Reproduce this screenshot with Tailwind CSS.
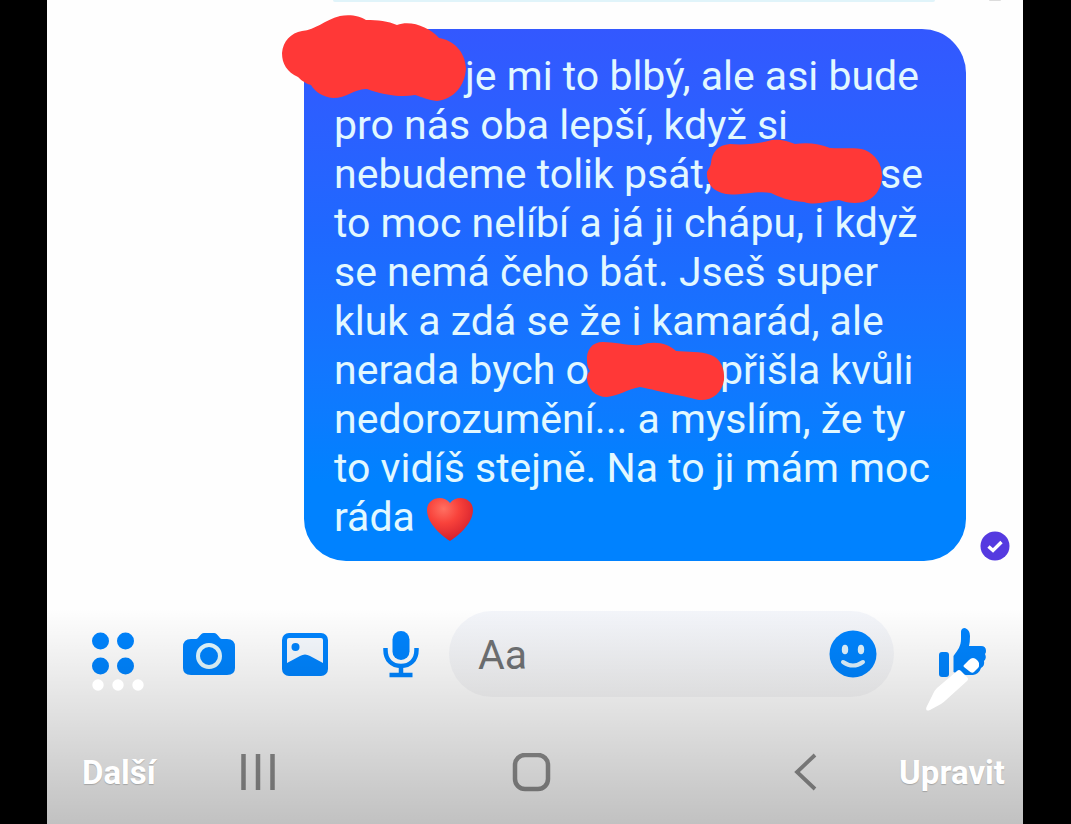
<!DOCTYPE html>
<html lang="cs">
<head>
<meta charset="utf-8">
<meta name="viewport" content="width=device-width, initial-scale=1">
<title>Konverzace</title>
<script src="https://cdn.jsdelivr.net/npm/@tailwindcss/browser@4"></script>
</head>
<body class="bg-black font-[Roboto,sans-serif]">
<div class="relative mr-12 ml-[47px] flex min-h-screen flex-col overflow-hidden bg-[#fefefe]">

  <!-- Bottom edge of the previous message -->
  <div class="flex h-[29px] items-start justify-end pr-[22px]">
    <div class="mr-[54px] h-[2px] w-[602px] rounded-b-full bg-[#e0f4fa]"></div>
    <div class="h-[1px] w-[12px] rounded-b-full bg-[#dcdcdc]"></div>
  </div>

  <main class="flex items-end justify-end pr-[13px]">
    <div class="w-[662px] rounded-[42px] rounded-tr-[44px] bg-linear-to-b from-[#3358ff] via-[#1f68ff] via-38% to-[#0082ff] to-85% pt-[23px] pb-[19px] pl-[30px] text-[41px] leading-[49px] whitespace-nowrap text-[#e2f8ff]">
      <p>
        <span class="block"><span class="relative inline-block h-[30px] w-[131px]"><svg class="absolute -top-[47px] -left-[52px] z-10" width="186" height="90" viewBox="282 13 186 90" fill="#ff3837"><path d="M282 53C283 41 291 33 302 31C316 30 324 20 340 16C350 14 360 16 366 20C378 20 388 21 397 25C411 20 429 27 439 38C453 40 465 51 466 68C465 86 454 99 437 101C428 100 422 97 415 95C399 98 381 94 367 89C356 88 347 98 333 98C323 97 315 92 311 85C304 83 300 79 298 77C287 72 282 64 282 53Z"/></svg></span>je mi to blbý, ale asi bude</span>
        <span class="block">pro nás oba lepší, když si</span>
        <span class="block">nebudeme tolik psát,<span class="relative inline-block h-[30px] w-[168px]"><svg class="absolute -top-[20px] -left-[8px] z-10" width="180" height="68" viewBox="704 138 180 68" fill="#ff3837"><path d="M707 172C708 169 711 166 711 163C712 152 718 145 730 144C742 145 757 144 768 141C776 138 788 141 795 144C808 142 820 144 830 148C843 149 856 147 865 150C876 155 882 164 882 176C882 192 871 203 855 203C849 203 845 202 839 200C828 201 816 206 804 202C789 201 779 197 771 193C758 190 738 196 726 194C714 192 706 184 707 172Z"/></svg></span>se</span>
        <span class="block">to moc nelíbí a já ji chápu, i když</span>
        <span class="block">se nemá čeho bát. Jseš super</span>
        <span class="block">kluk a zdá se že i kamarád, ale</span>
        <span class="block">nerada bych o<span class="relative inline-block h-[30px] w-[131px]"><svg class="absolute -top-[14px] -left-[4px] z-10" width="142" height="62" viewBox="585 340 142 62" fill="#ff3837"><path d="M587 361C586 350 592 342 603 342C615 342 629 346 641 345C655 340 669 344 676 351C687 352 701 351 711 355C721 359 725 369 724 380C722 393 712 401 699 400C690 398 684 396 677 395C662 392 650 389 640 387C628 389 618 396 607 397C595 397 588 389 587 379C587 375 588 373 590 371C588 368 587 365 587 361Z"/></svg></span>přišla kvůli</span>
        <span class="block">nedorozumění... a myslím, že ty</span>
        <span class="block">to vidíš stejně. Na to ji mám moc</span>
        <span class="flex items-center gap-[11px]">ráda
          <svg class="mt-1" width="48" height="45" viewBox="0 0 48 45" role="img" aria-label="srdce"><defs><radialGradient id="heart" cx="36%" cy="25%" r="75%"><stop offset="0" stop-color="#ff7062"/><stop offset=".45" stop-color="#f8423b"/><stop offset="1" stop-color="#d4202d"/></radialGradient></defs><path d="M24 44C19 41 1 28 1 13C1 1 17-3 24 6C31-3 47 1 47 13C47 28 29 41 24 44Z" fill="url(#heart)"/></svg>
        </span>
      </p>
    </div>
    <svg class="ml-[14px] shrink-0" width="30" height="30" viewBox="0 0 30 30" role="img" aria-label="Doručeno"><circle cx="15" cy="15" r="14.5" fill="#553ae0"/><path d="M8.5 15.5L13 19.500L21.500 11" fill="none" stroke="#fff" stroke-width="3.4"/></svg>
  </main>

  <div class="mt-[50px] flex h-[86px] items-center pr-[14px] pl-[18px] text-[#0084ff]">
    <button class="flex w-24 justify-center" aria-label="Další možnosti"><svg width="44" height="44" viewBox="0 0 44 44" fill="currentColor"><circle cx="9.500" cy="9" r="8.500"/><circle cx="34.500" cy="9" r="8.500"/><circle cx="9.500" cy="34" r="8.500"/><circle cx="34.500" cy="34" r="8.500"/></svg></button>
    <button class="flex w-24 justify-center" aria-label="Fotoaparát"><svg width="52" height="44" viewBox="0 0 52 44"><path d="M8 7H13C16 7 17 1 21 1H31C35 1 36 7 39 7H44Q52 7 52 15V36Q52 43 44 43H8Q0 43 0 36V15Q0 7 8 7Z" fill="currentColor"/><circle cx="26" cy="24" r="11" fill="none" stroke="#e2f8ff" stroke-width="4"/></svg></button>
    <button class="flex w-24 justify-center" aria-label="Galerie"><svg width="48" height="44" viewBox="0 0 48 44"><rect x="1" y="1" width="46" height="43" rx="7" fill="currentColor"/><path d="M6 8Q6 6 8 6H40Q42 6 42 8V31L29 24Q24 21 19 24L6 31Z" fill="#f6faff"/><circle cx="14.500" cy="15" r="4" fill="currentColor"/></svg></button>
    <button class="flex w-24 justify-center" aria-label="Hlasová zpráva"><svg width="38" height="48" viewBox="0 0 38 48"><rect x="10.500" y="1" width="17" height="29" rx="8.500" fill="currentColor"/><path d="M3.500 18V20C3.500 30 10 36 19 36S34.500 30 34.500 20V18M19 36V45M7.500 45H30.500" fill="none" stroke="currentColor" stroke-width="4.500"/></svg></button>
    <div class="flex h-full min-w-0 flex-1 items-center rounded-full bg-linear-to-b from-[#f3f5fa] to-[#f5f5f6] pr-[17px] pl-[29px]">
      <input type="text" aria-label="Zpráva" placeholder="Aa" class="min-w-0 flex-1 bg-transparent pt-1 text-[41px] text-black outline-none placeholder:text-[#707274]">
      <button aria-label="Emoji"><svg class="block" width="48" height="48" viewBox="0 0 48 48"><circle cx="24" cy="24" r="23.500" fill="currentColor"/><ellipse cx="16" cy="19.500" rx="3.200" ry="4.700" fill="#dff3ff"/><ellipse cx="32" cy="19.500" rx="3.200" ry="4.700" fill="#dff3ff"/><path d="M14 32Q24 39 34 32" fill="none" stroke="#dff3ff" stroke-width="4" stroke-linecap="round"/></svg></button>
    </div>
    <button class="ml-[23px] flex w-[92px] justify-center" aria-label="To se mi líbí"><svg width="48" height="52" viewBox="0 0 48 52" fill="currentColor"><rect x="0" y="24" width="10" height="25" rx="3"/><path d="M14.500 28C19 22 22 18 22 11V4Q22 0 26 0Q31 2 31 8Q31 14 30 18H42Q47 18 47 23Q47 25 46 26Q48 30 45 33Q46 38 42 40Q40 46 34 47H28Q20 47 14.500 44Z"/></svg></button>
  </div>

  <nav class="flex flex-1 items-center justify-between pt-6 pr-[198px] pl-[191px] text-[#8f8f8f]" aria-label="Systémová navigace">
    <button aria-label="Poslední aplikace"><svg class="block" width="40" height="40" viewBox="0 0 40 40" stroke="currentColor" stroke-width="4.500"><path d="M5.500 1V37M20 1V37M34.500 1V37"/></svg></button>
    <button aria-label="Domů"><svg class="block" width="40" height="40" viewBox="0 0 40 40" fill="none" stroke="currentColor" stroke-width="4.500"><rect x="3" y="2" width="33" height="34" rx="10"/></svg></button>
    <button aria-label="Zpět"><svg class="block" width="40" height="40" viewBox="0 0 40 40" fill="none" stroke="currentColor" stroke-width="3.800"><path d="M30 2L12 19L30 36"/></svg></button>
  </nav>

  <!-- Story controls laid over the picture -->
  <div class="pointer-events-none absolute inset-x-0 bottom-0 flex h-[216px] items-end justify-between bg-linear-to-b from-black/0 to-black/24 pr-[18px] pb-[30px] pl-[35px] text-[33px] leading-[42px] font-bold text-white">
    <button class="pointer-events-auto flex flex-col items-center gap-[61px] text-shadow-xs"><svg width="54" height="12" viewBox="0 0 54 12" fill="#fff"><circle cx="6" cy="6" r="5.700"/><circle cx="26" cy="6" r="5.700"/><circle cx="46" cy="6" r="5.700"/></svg>Další</button>
    <button class="pointer-events-auto flex flex-col items-center gap-[39px] text-shadow-xs"><svg width="54" height="56" viewBox="925 657 54 56" fill="#fff"><path d="M926.500 707L933 694Q934 691 937 688L957 671Q959 669 961 671L967 677Q969 679 967 681L946 700Q944 702 941 704L930 710Q925 712 926.500 707ZM964 665L969 660Q973 656 977 660Q981 664 978 668L974 672Q972 674 969 671L964 667Q963 666 964 665Z"/></svg>Upravit</button>
  </div>
</div>
</body>
</html>
